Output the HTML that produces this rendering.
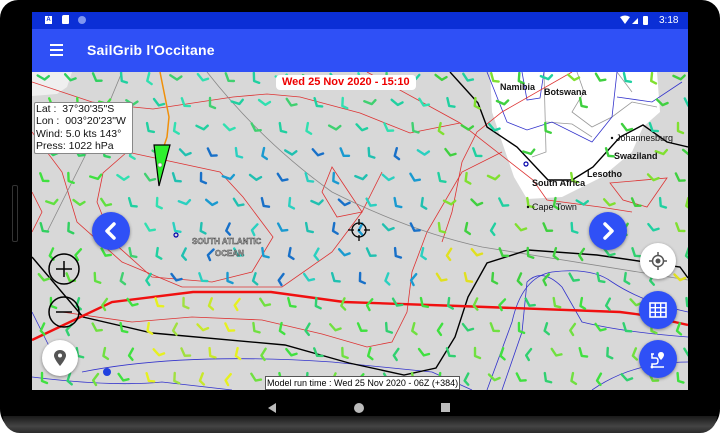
<!DOCTYPE html>
<html><head><meta charset="utf-8">
<style>
html,body{margin:0;padding:0;width:720px;height:435px;overflow:hidden;background:#fff;font-family:"Liberation Sans",sans-serif}
#dev{position:absolute;left:0;top:0;width:720px;height:433px;background:#000;border-radius:18px 18px 24px 24px;}
#bot{position:absolute;left:3px;top:416px;width:714px;height:17px;background:linear-gradient(#1a1a1a,#444 60%,#2a2a2a);border-radius:0 0 24px 24px}
#scr{position:absolute;left:32px;top:12px;width:656px;height:378px;overflow:hidden;background:#d8d8d8}
#sb{position:absolute;left:0;top:0;width:656px;height:17px;background:#0b2fd6;color:#fff;font-size:10px}
#ab{position:absolute;left:0;top:17px;width:656px;height:43px;background:#2f50f6;color:#fff}
#ab .t{position:absolute;left:55px;top:13px;font-size:14px;font-weight:bold;letter-spacing:0.2px}
.ham{position:absolute;left:18px;width:13px;height:2px;background:#fff}
#map{position:absolute;left:0;top:60px;width:656px;height:318px}
.fab{position:absolute;width:38px;height:38px;border-radius:50%;background:#2f50f6;box-shadow:0 1px 3px rgba(0,0,0,.4)}
.wfab{position:absolute;width:36px;height:36px;border-radius:50%;background:#fff;box-shadow:0 1px 3px rgba(0,0,0,.4)}
#info{position:absolute;left:2px;top:30px;width:96px;height:50px;background:#fff;border:1px solid #888;border-radius:2px;font-size:10.5px;line-height:12.3px;color:#111;padding-left:1px}
#date{position:absolute;left:244px;top:3px;height:15px;padding:0 6px;background:#fff;border-radius:4px;color:#e00;font-weight:bold;font-size:11px;line-height:15px}
#mrt{position:absolute;left:233px;top:304px;background:#fff;border:1px solid #555;font-size:9px;line-height:12px;padding:0 1px;color:#000}
</style></head><body>
<div id="dev"></div><div id="bot"></div>
<div id="scr">
 <div id="sb">
  <div style="position:absolute;left:13px;top:4px;width:7px;height:8px;background:#fff;font-size:6px;color:#0b2fd6;text-align:center;font-weight:bold;line-height:8px">A</div>
  <div style="position:absolute;left:30px;top:3px;width:7px;height:9px;background:#fff;border-radius:2px 0 1px 1px"></div>
  <div style="position:absolute;left:46px;top:4px;width:8px;height:8px;border-radius:50%;background:#7f96f0"></div>
  <svg style="position:absolute;left:588px;top:3px" width="30" height="11"><path d="M0 2 Q5 -1 10 2 L5 9Z" fill="#fff"/><path d="M12 9 L18 3 L18 9Z" fill="#fff"/><rect x="23" y="1" width="5" height="9" rx="1" fill="#fff"/></svg>
  <div style="position:absolute;left:627px;top:3px;font-size:10px">3:18</div>
 </div>
 <div id="ab">
  <div class="ham" style="top:15px"></div><div class="ham" style="top:20px"></div><div class="ham" style="top:25px"></div>
  <div class="t">SailGrib l'Occitane</div>
 </div>
 <div id="map">
 <svg id="sv" width="656" height="318" viewBox="0 0 656 318" style="position:absolute;left:0;top:0">
  <path d="M458 0 L625 0 L628 40 L611 55 L600 80 L570 105 L530 125 L495 127 L482 105 L470 70 L460 40 Z" fill="#fff"/>
  <path d="M0 0 L40 0 L35 15 L25 22 L0 24Z" fill="#fff" opacity=".6"/>
  <g fill="none" stroke="#999" stroke-width="0.8">
   <path d="M512 0 L514 80 L500 85"/><path d="M514 50 L540 52 L560 65"/><path d="M545 0 L552 20 L540 40 L560 55 L580 45 L600 30 L625 35"/>
   <path d="M585 0 L600 20"/>
  </g>
  <g fill="none" stroke="#33c" stroke-width="0.8">
   <path d="M490 0 L495 28 L508 26 L512 0"/><path d="M455 0 L475 50 L495 58 L520 50 L560 70 L580 45 L585 0"/><path d="M585 25 L620 30 L650 10"/>
   <path d="M0 240 L10 260 L20 280"/><path d="M50 300 Q150 280 300 290 L400 300 L440 318"/><path d="M0 305 Q80 315 130 310 L200 318"/>
   <path d="M455 318 L480 250 Q490 205 520 200 Q560 195 580 210 Q610 230 656 240"/><path d="M470 318 L490 260 L495 210 Q510 195 530 215 L550 250 Q590 260 656 265"/><path d="M560 318 Q600 290 656 290"/>
  </g>
  <g fill="none" stroke="#d33" stroke-width="0.8">
   <path d="M0 10 L60 30 L101 35 L121 37 L201 25 L235 22 L268 25 L328 41 L378 61 L428 51"/>
   <path d="M335 0 L428 51 L501 108 L515 128 L568 135 L600 140"/>
   <path d="M578 111 L635 106 L615 135 L591 128 Z"/>
   <path d="M95 80 L188 100 L211 125 L241 165 L220 200 L180 210 L120 205 L81 170 L65 130 L71 101 L95 80"/>
   <path d="M0 60 L30 100 L45 150 L90 190 L150 215 L250 215 L300 180 L330 140 L350 100"/>
   <path d="M0 120 L10 140 L0 160"/>
   <path d="M300 95 L330 140 L305 145 L290 120 Z"/>
   <path d="M30 240 L100 250 L160 245 L230 248 L290 262 L335 275 L360 270 L375 240 L380 200 L395 160 L430 100 L470 80"/>
   <path d="M540 0 L470 40 L445 60 L430 90 L420 140 L410 170"/>
  </g>
  <g fill="none" stroke="#888" stroke-width="0.8">
   <path d="M175 0 Q230 70 300 120 Q380 160 450 175 L656 208"/>
   <path d="M90 0 L65 60 L40 110 L15 160"/>
  </g>
  <path d="M0 185 L51 245 L120 261 L253 273 L317 291 L372 303 L404 296 L423 265 L436 225 L455 191 L496 178 L565 183 L648 195 L656 206" fill="none" stroke="#000" stroke-width="1.4"/>
  <path d="M418 0 L446 31 L455 55 L485 75 L516 108 L540 108 L561 95 L588 65 L611 53 L635 70 L656 75" fill="none" stroke="#000" stroke-width="1.4"/>
  <path d="M128 0 L133 25 L137 45 L135 65 L130 80" fill="none" stroke="#f0900a" stroke-width="1.5"/>
  <path d="M0 268 L80 230 L161 220 L239 220 L312 230 L427 234 L588 240 L611 243 L656 253" fill="none" stroke="#f01010" stroke-width="2.4"/>
  <g id="barbs"></g>
  <path d="M122 73 L138 73 L127 114 Z" fill="#2ef02e" stroke="#000" stroke-width="1.2"/>
  <circle cx="128" cy="93" r="2" fill="#fff" stroke="#777" stroke-width=".6"/>
  <circle cx="144" cy="163" r="2" fill="none" stroke="#00a" stroke-width="1.2"/>
  <circle cx="494" cy="92" r="2" fill="none" stroke="#00a" stroke-width="1.2"/>
  <circle cx="75" cy="300" r="4" fill="#2040e0"/>
  <circle cx="327" cy="158" r="7" fill="none" stroke="#000" stroke-width="1.3"/>
  <path d="M327 147 V153 M327 163 V169 M316 158 H322 M332 158 H338" stroke="#000" stroke-width="1.3"/>
  <circle cx="327" cy="158" r="1" fill="#000"/>
  <g font-family="Liberation Sans,sans-serif" font-size="9" fill="#111">
   <text x="468" y="18" font-weight="bold">Namibia</text>
   <text x="512" y="23" font-weight="bold">Botswana</text>
   <text x="584" y="69">Johannesburg</text><circle cx="580" cy="66" r="1.2"/>
   <text x="582" y="87" font-weight="bold">Swaziland</text>
   <text x="555" y="105" font-weight="bold">Lesotho</text>
   <text x="500" y="114" font-weight="bold">South Africa</text>
   <text x="500" y="138">Cape Town</text><circle cx="496" cy="135" r="1.2"/>
   <text x="160" y="172" font-size="8" font-weight="bold" fill="#bbb" stroke="#333" stroke-width=".4">SOUTH ATLANTIC</text>
   <text x="183" y="184" font-size="8" font-weight="bold" fill="#bbb" stroke="#333" stroke-width=".4">OCEAN</text>
  </g>
  <circle cx="32" cy="197" r="15" fill="none" stroke="#000" stroke-width="1.5"/><path d="M24 197 H40 M32 189 V205" stroke="#000" stroke-width="1.5"/>
  <circle cx="32" cy="240" r="15" fill="none" stroke="#000" stroke-width="1.5"/><path d="M24 240 H40" stroke="#000" stroke-width="1.5"/>
 </svg>
 <div id="info">Lat :&nbsp; 37°30'35"S<br>Lon :&nbsp; 003°20'23"W<br>Wind: 5.0 kts 143°<br>Press: 1022 hPa</div>
 <div id="date">Wed 25 Nov 2020 - 15:10</div>
 <div id="mrt">Model run time : Wed 25 Nov 2020 - 06Z (+384)</div>
 <div class="fab" style="left:60px;top:140px"><svg width="38" height="38"><path d="M22 12 L15 19 L22 26" fill="none" stroke="#fff" stroke-width="3.5" stroke-linecap="round" stroke-linejoin="round"/></svg></div>
 <div class="fab" style="left:557px;top:140px"><svg width="38" height="38"><path d="M16 12 L23 19 L16 26" fill="none" stroke="#fff" stroke-width="3.5" stroke-linecap="round" stroke-linejoin="round"/></svg></div>
 <div class="wfab" style="left:608px;top:171px"><svg width="36" height="36"><circle cx="18" cy="18" r="5.5" fill="none" stroke="#555" stroke-width="1.5"/><circle cx="18" cy="18" r="2.5" fill="#555"/><path d="M18 9V12.5M18 23.5V27M9 18H12.5M23.5 18H27" stroke="#555" stroke-width="1.5"/></svg></div>
 <div class="fab" style="left:607px;top:219px"><svg width="38" height="38"><rect x="11" y="12" width="16" height="14" fill="none" stroke="#fff" stroke-width="1.6"/><path d="M11 16.7H27M11 21.3H27M16.3 12V26M21.7 12V26" stroke="#fff" stroke-width="1.4"/></svg></div>
 <div class="wfab" style="left:10px;top:268px"><svg width="36" height="36"><path d="M18 10 C14 10 12 13 12 15.5 C12 19 18 26 18 26 C18 26 24 19 24 15.5 C24 13 22 10 18 10Z" fill="#555"/><circle cx="18" cy="15.5" r="2" fill="#fff"/></svg></div>
 <div class="fab" style="left:607px;top:268px"><svg width="38" height="38"><path d="M22 12 C20 12 19 13.5 19 15 C19 17 22 20 22 20 C22 20 25 17 25 15 C25 13.5 24 12 22 12Z" fill="#fff"/><path d="M12 14 H15 M13 14 V18 H17 Q19 18 19 21 Q19 24 16 24 H13 V27 H25" fill="none" stroke="#fff" stroke-width="1.5"/><circle cx="13" cy="27" r="1.4" fill="#fff"/></svg></div>
 </div>
</div>
<svg style="position:absolute;left:0;top:390px" width="720" height="30"><path d="M268 18 L276 13 L276 23Z" fill="#bbb"/><circle cx="359" cy="18" r="5" fill="#bbb"/><rect x="441" y="13" width="9" height="9" fill="#bbb"/></svg>
<div style="position:absolute;left:12px;top:185px;width:4px;height:55px;border:1px solid #333;border-radius:2px"></div>
<script>
(function(){
var g=document.getElementById('barbs'),s='';
function col(x,y){
 if(y>230){ if(x>100&&x<220) return ['#c8e82a','#e6f020','#a0e040'][(x/26|0)%3]; return ['#40e040','#30d070','#70e040'][(x/26|0)%3];}
 if(x<80) return ['#30d060','#40e040','#60e040'][(y/25|0)%3];
 if(x>140&&x<400&&y>60&&y<230) return ['#2ad0c0','#1a9ad0','#20c0b0','#1870c8'][((x+y)/23|0)%4];
 if(x>400&&y>170) return ['#40d040','#e0e020','#30d070'][((x*3+y)/29|0)%3];
 if(x>400) return ['#40d040','#20d0a0','#80e030'][((x+y)/27|0)%3];
 return ['#20d0a0','#30e0b0','#40d070'][((x+y)/25|0)%3];
}
for(var r=0;r<13;r++){for(var c=0;c<25;c++){
 var x=10+c*26.5+(r%2)*9,y=6+r*25;
 if(x>465&&x<610&&y<120&&y>10&&((c+r)%3!=0)) continue;
 var a=((x*0.7+y*1.3)%90)-45+(y<150?-30:0);
 var cl=col(x,y);
 s+='<path d="M0 -5 L0 3 L5 5" transform="translate('+x.toFixed(1)+','+y.toFixed(1)+') rotate('+a.toFixed(0)+')" fill="none" stroke="'+cl+'" stroke-width="2.4" stroke-linecap="round" stroke-linejoin="round"/>';
}}
g.innerHTML=s;
})();
</script>
</body></html>
